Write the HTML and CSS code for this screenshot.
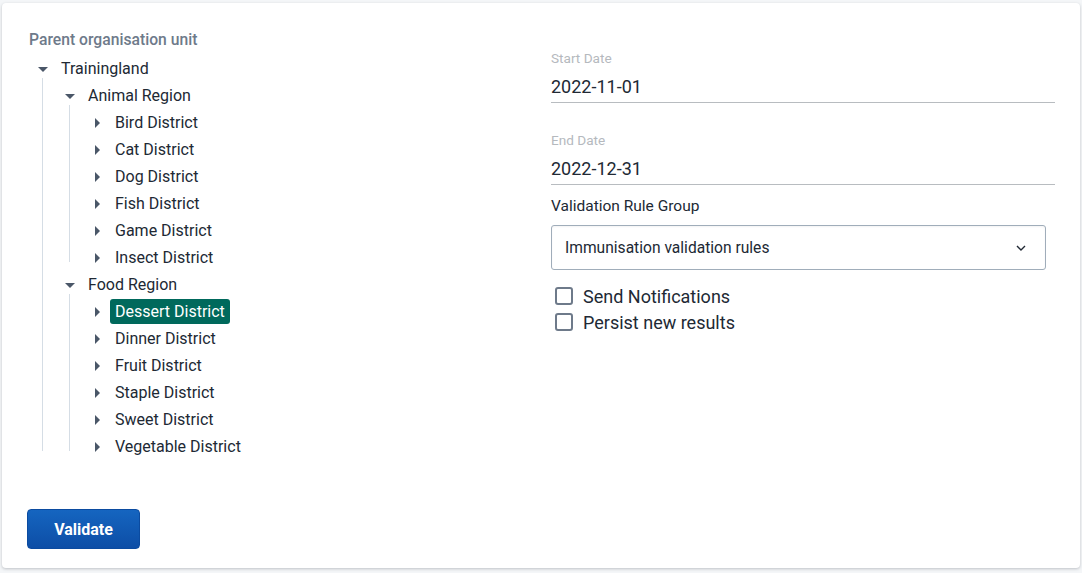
FILE: index.html
```
<!DOCTYPE html>
<html>
<head>
<meta charset="utf-8">
<link rel="stylesheet" href="styles.css">
</head>
<body>
<div class="card">
  <div class="columns">
    <div class="left">
      <div class="tree-title">Parent organisation unit</div>
      <ul class="tree">
        <li>
          <div class="row"><span class="arrow"><svg width="10" height="5" viewBox="0 0 10 5"><path d="M0 0H10L5 5Z"/></svg></span><span class="label">Trainingland</span></div>
          <ul class="children outer">
            <li>
              <div class="row"><span class="arrow"><svg width="10" height="5" viewBox="0 0 10 5"><path d="M0 0H10L5 5Z"/></svg></span><span class="label">Animal Region</span></div>
              <ul class="children">
                <li><div class="row"><span class="arrow"><svg class="r" width="5" height="10" viewBox="0 0 5 10"><path d="M0 0V10L5 5Z"/></svg></span><span class="label">Bird District</span></div></li>
                <li><div class="row"><span class="arrow"><svg class="r" width="5" height="10" viewBox="0 0 5 10"><path d="M0 0V10L5 5Z"/></svg></span><span class="label">Cat District</span></div></li>
                <li><div class="row"><span class="arrow"><svg class="r" width="5" height="10" viewBox="0 0 5 10"><path d="M0 0V10L5 5Z"/></svg></span><span class="label">Dog District</span></div></li>
                <li><div class="row"><span class="arrow"><svg class="r" width="5" height="10" viewBox="0 0 5 10"><path d="M0 0V10L5 5Z"/></svg></span><span class="label">Fish District</span></div></li>
                <li><div class="row"><span class="arrow"><svg class="r" width="5" height="10" viewBox="0 0 5 10"><path d="M0 0V10L5 5Z"/></svg></span><span class="label">Game District</span></div></li>
                <li><div class="row"><span class="arrow"><svg class="r" width="5" height="10" viewBox="0 0 5 10"><path d="M0 0V10L5 5Z"/></svg></span><span class="label">Insect District</span></div></li>
              </ul>
            </li>
            <li>
              <div class="row"><span class="arrow"><svg width="10" height="5" viewBox="0 0 10 5"><path d="M0 0H10L5 5Z"/></svg></span><span class="label">Food Region</span></div>
              <ul class="children">
                <li><div class="row"><span class="arrow"><svg class="r" width="5" height="10" viewBox="0 0 5 10"><path d="M0 0V10L5 5Z"/></svg></span><span class="label selected">Dessert District</span></div></li>
                <li><div class="row"><span class="arrow"><svg class="r" width="5" height="10" viewBox="0 0 5 10"><path d="M0 0V10L5 5Z"/></svg></span><span class="label">Dinner District</span></div></li>
                <li><div class="row"><span class="arrow"><svg class="r" width="5" height="10" viewBox="0 0 5 10"><path d="M0 0V10L5 5Z"/></svg></span><span class="label">Fruit District</span></div></li>
                <li><div class="row"><span class="arrow"><svg class="r" width="5" height="10" viewBox="0 0 5 10"><path d="M0 0V10L5 5Z"/></svg></span><span class="label">Staple District</span></div></li>
                <li><div class="row"><span class="arrow"><svg class="r" width="5" height="10" viewBox="0 0 5 10"><path d="M0 0V10L5 5Z"/></svg></span><span class="label">Sweet District</span></div></li>
                <li><div class="row"><span class="arrow"><svg class="r" width="5" height="10" viewBox="0 0 5 10"><path d="M0 0V10L5 5Z"/></svg></span><span class="label">Vegetable District</span></div></li>
              </ul>
            </li>
          </ul>
        </li>
      </ul>
    </div>
    <div class="right">
      <div class="date-field first">
        <div class="date-label">Start Date</div>
        <div class="date-value">2022-11-01</div>
      </div>
      <div class="date-field second">
        <div class="date-label">End Date</div>
        <div class="date-value">2022-12-31</div>
      </div>
      <div class="select-label">Validation Rule Group</div>
      <div class="select">
        <span>Immunisation validation rules</span>
        <svg class="chevron" width="10" height="6" viewBox="0 0 10 6"><path d="M1 1 L5 5 L9 1" fill="none" stroke="#212934" stroke-width="1.4"/></svg>
      </div>
      <div class="checks">
        <label class="check"><span class="box"></span><span>Send Notifications</span></label>
        <label class="check"><span class="box"></span><span>Persist new results</span></label>
      </div>
    </div>
  </div>
  <div class="actions">
    <button class="btn-primary">Validate</button>
  </div>
</div>
</body>
</html>
```
FILE: styles.css
```
* { box-sizing: border-box; }
html, body { margin: 0; padding: 0; }
body {
  background: #f4f6f8;
  font-family: Roboto, "Noto Sans", sans-serif;
  color: #212934;
  height: 573px;
  overflow: hidden;
  padding: 3px 2px 0 2px;
}
.card {
  background: #fff;
  border-radius: 4px;
  box-shadow: 0 1px 3px rgba(33, 41, 52, 0.25);
  height: 565px;
  width: 1078px;
  padding: 28px 25px 19px 25px;
  display: flex;
  flex-direction: column;
}
.columns {
  display: grid;
  grid-template-columns: 524px 504px;
}
.left { padding-left: 2px; }
.tree-title {
  font-size: 15.7px;
  line-height: 18px;
  color: #6e7a8a;
  font-weight: 500;
}
.tree, .children {
  list-style: none;
  margin: 0;
  padding: 0;
}
.tree { margin-top: 6px; }
.children {
  position: relative;
  margin-left: 13px;
  padding-left: 14px;
}
.children::before {
  content: "";
  position: absolute;
  left: 0;
  top: -4px;
  bottom: 9px;
  width: 1px;
  background: #d5dde5;
}
.row {
  height: 27px;
  display: flex;
  align-items: center;
}
.arrow {
  width: 27px;
  height: 27px;
  display: flex;
  align-items: center;
  justify-content: center;
  flex: none;
}
.arrow svg { display: block; fill: #4a5768; margin-top: 1px; }
.arrow svg.r { margin-top: 0; margin-left: 1px; }
.label {
  font-size: 16px;
  line-height: 25px;
  padding: 0 5px;
  border-radius: 3px;
  white-space: nowrap;
}
.label.selected {
  background: #00695c;
  color: #fff;
}
.right { padding-top: 20px; }
.date-label {
  font-size: 13.6px;
  line-height: 14px;
  color: #b5b9be;
}
.date-value {
  font-size: 18px;
  line-height: 20px;
  margin-top: 12px;
  padding-bottom: 5px;
  border-bottom: 1px solid #b8bcc0;
}
.date-field.second { margin-top: 30px; }
.select-label {
  margin-top: 13px;
  font-size: 15.5px;
  line-height: 16px;
  color: #212934;
}
.select {
  margin-top: 11px;
  margin-right: 9px;
  height: 45px;
  border: 1px solid #a0adba;
  border-radius: 3px;
  display: flex;
  align-items: center;
  justify-content: space-between;
  padding: 0 19px 0 13px;
  font-size: 15.6px;
  box-shadow: inset 0 1px 2px rgba(48, 54, 60, 0.06);
}
.checks { margin-top: 13px; }
.check {
  display: flex;
  align-items: center;
  height: 26px;
  font-size: 18px;
  gap: 10px;
}
.box {
  width: 18px;
  height: 18px;
  border: 2px solid #6e7a8a;
  border-radius: 3px;
  margin-left: 4px;
  flex: none;
}
.actions { margin-top: auto; }
.btn-primary {
  width: 113px;
  height: 40px;
  border-radius: 4px;
  border: 1px solid #0b4ba0;
  background: linear-gradient(180deg, #1565c0 0%, #0d4ea6 100%);
  color: #fff;
  font-family: Roboto, "Noto Sans", sans-serif;
  font-weight: 700;
  font-size: 16px;
  padding: 0;
}
```
